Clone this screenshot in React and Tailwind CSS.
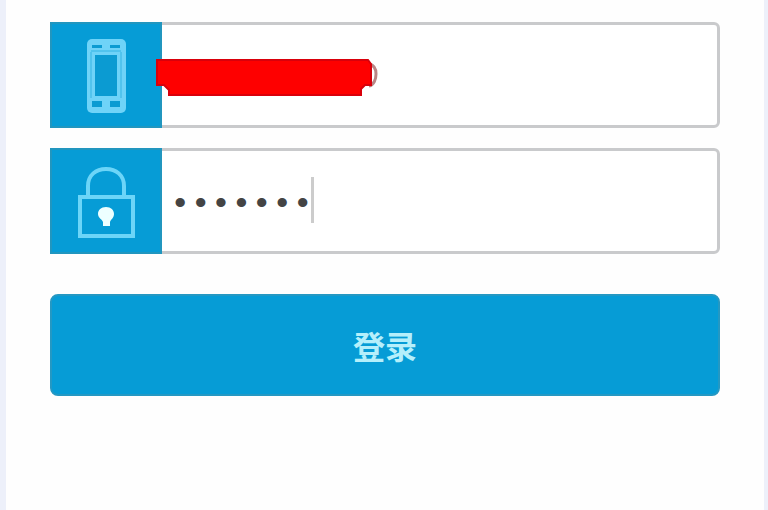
import React, { useState } from "react";

const PhoneIcon = () => (
  <svg
    className="h-[78px] w-11"
    viewBox="0 0 44 78"
    role="img"
    aria-label="手机号"
  >
    <rect x="3" y="3" width="39" height="74" rx="5" fill="#6fd3f8" />
    <path
      d="M8 9H18V12H8ZM26 9H36V12H26ZM11 19H33V60H11ZM8 65H18V71H8ZM26 65H36V71H26Z"
      fill="#0b9bd2"
    />
    <path
      d="M7 16V62M37 16V62M7 15H37"
      fill="none"
      stroke="#35b4e4"
      strokeWidth="1"
    />
  </svg>
);

const LockIcon = () => (
  <svg
    className="h-[74px] w-[60px]"
    viewBox="0 0 60 74"
    fill="none"
    stroke="#6cd5f8"
    strokeWidth="4"
    role="img"
    aria-label="密码"
  >
    <path d="M12 31V22C12 11 20 5 30 5S48 11 48 22V31" />
    <rect x="4" y="33" width="53" height="39" />
    <path
      d="M30 43C25 43 22 46 22 50C22 54 26 55 27 58V62H34V58C35 55 38 54 38 50C38 46 35 43 30 43Z"
      fill="#edffff"
      stroke="none"
    />
  </svg>
);

// Coretan merah yang menutupi nomor telepon
const Redaction = () => (
  <svg
    className="absolute -left-2 top-8 h-10 w-[224px]"
    viewBox="0 0 224 40"
    aria-hidden="true"
  >
    <path
      d="M215 7C220 8 222 12 222 17S220 28 215 29"
      fill="none"
      stroke="#b98585"
      strokeWidth="3"
    />
    <path
      d="M3 3H214L217 7V28H211L207 32V38H15V33L10 28H3Z"
      fill="#fe0000"
      stroke="#d9000b"
      strokeWidth="2"
    />
  </svg>
);

const Field = ({ id, icon, children }) => (
  <div className="flex h-[106px] rounded-md border-3 border-[#c9cacc] bg-white">
    <label
      htmlFor={id}
      className="-my-[3px] -ml-[3px] flex w-28 shrink-0 items-center justify-center border-2 border-[#2196bf] bg-[#069cd6]"
    >
      {icon}
    </label>
    <div className="relative flex min-w-0 flex-1">{children}</div>
  </div>
);

const App = () => {
  const [phone, setPhone] = useState("");
  const [password, setPassword] = useState("1234567");

  return (
    <main className="min-h-screen border-x-6 border-r-4 border-[#edf0fa] bg-[#fefefe] pb-28 pl-11 pr-11 pt-[22px]">
      <form
        className="flex flex-col gap-5"
        onSubmit={(e) => e.preventDefault()}
      >
        <Field id="phone" icon={<PhoneIcon />}>
          <input
            id="phone"
            type="tel"
            value={phone}
            onChange={(e) => setPhone(e.target.value)}
            className="w-full bg-transparent px-4 text-[34px] outline-none"
          />
          <Redaction />
        </Field>

        <Field id="password" icon={<LockIcon />}>
          <input
            id="password"
            type="password"
            value={password}
            onChange={(e) => setPassword(e.target.value)}
            className="w-full bg-transparent px-2 pt-2 font-['Liberation_Mono',monospace] text-[34px] text-[#444444] outline-none"
          />
          <span className="absolute left-[149px] top-[26px] h-[46px] w-[3px] bg-[#cccccc]" />
        </Field>

        <button
          type="submit"
          className="mt-5 h-[102px] rounded-lg border-2 border-[#2498c3] bg-[#069cd6] font-['Noto_Sans_CJK_SC',sans-serif] text-[32px] font-bold text-[#b5effb]"
        >
          登录
        </button>
      </form>
    </main>
  );
};

export default App;
